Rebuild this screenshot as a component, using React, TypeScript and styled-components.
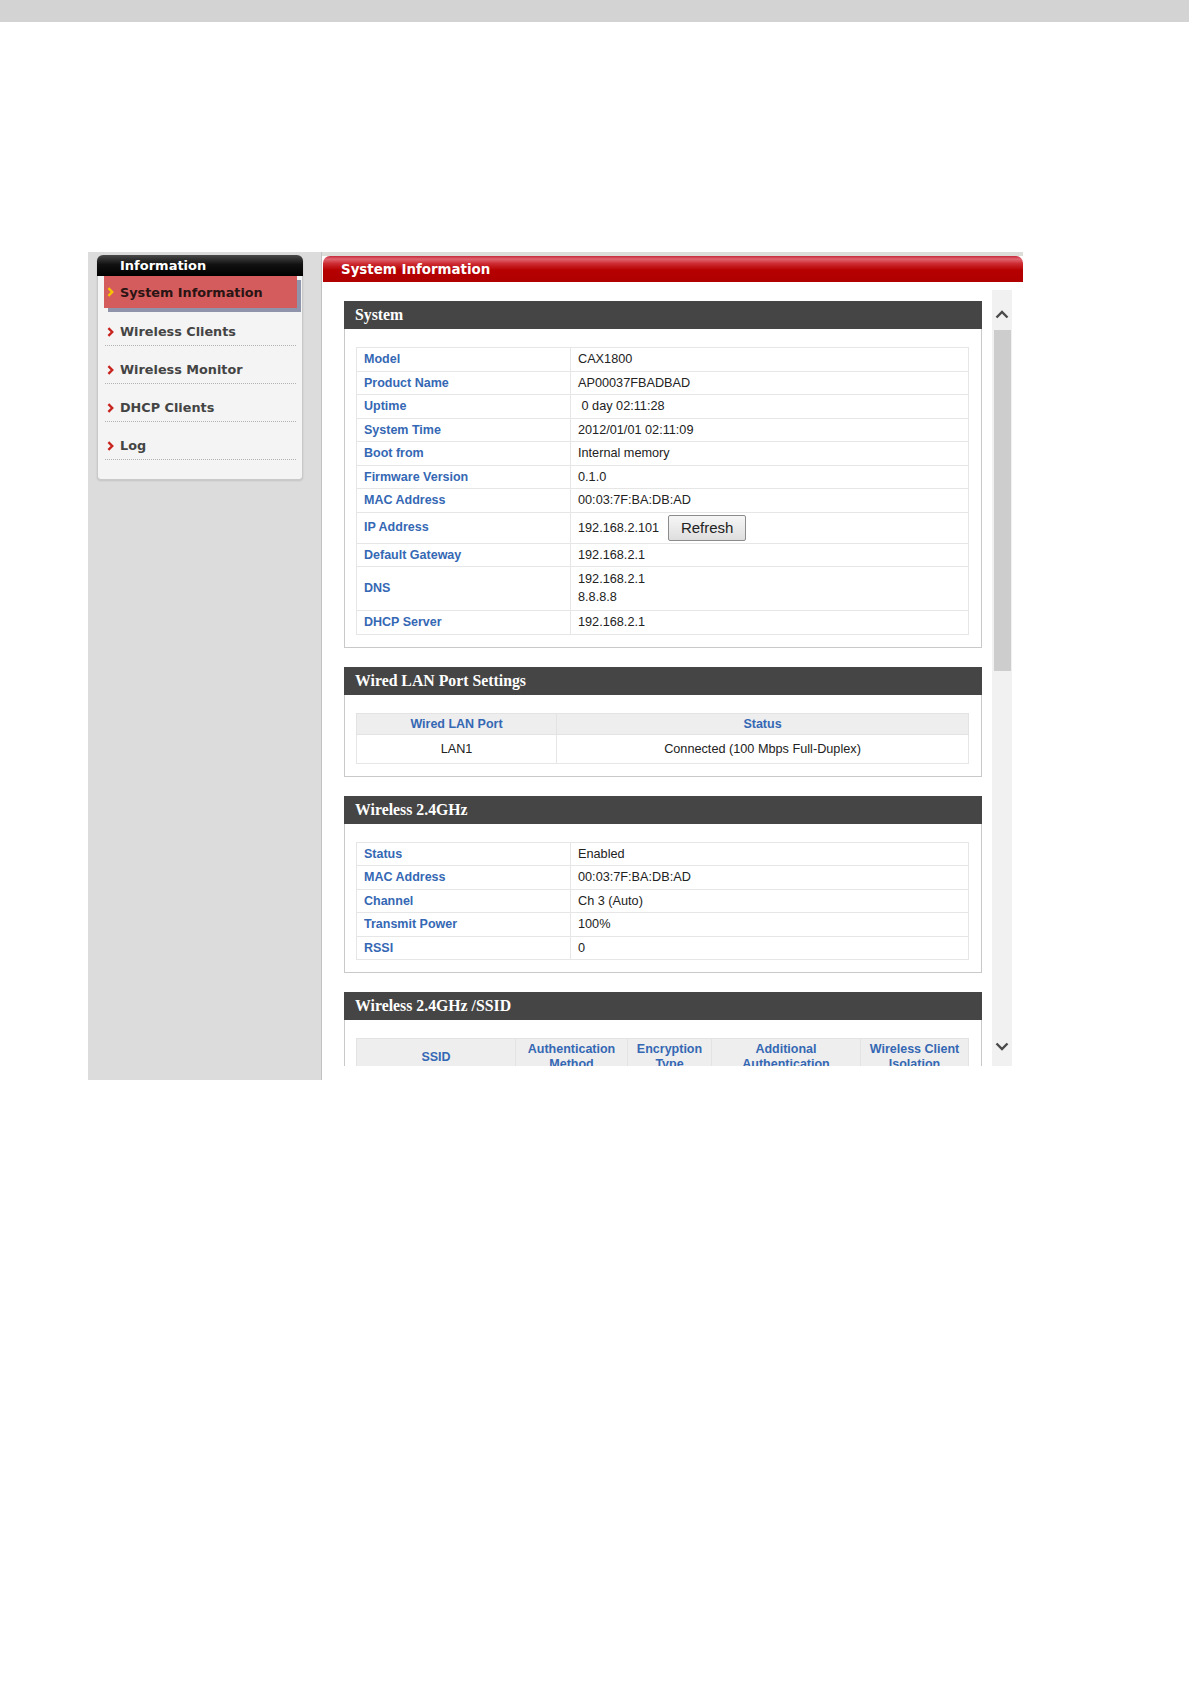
import styled, { createGlobalStyle } from 'styled-components';

const GlobalStyle = createGlobalStyle`
  html, body {
    margin: 0;
    padding: 0;
    background: #fff;
  }
  body {
    font-family: "Liberation Sans", Arial, sans-serif;
    color: #222;
  }
`;

// Page chrome
const TopBar = styled.div`
  width: 1189px;
  height: 22px;
  background: #d3d3d3;
`;

const Frame = styled.div`
  display: flex;
  align-items: flex-start;
  width: 935px;
  margin: 230px 0 0 88px;
`;

// Left menu
const SideColumn = styled.aside`
  box-sizing: border-box;
  width: 234px;
  height: 828px;
  padding: 3px 0 0 9px;
  background: #dcdcdc;
  border-right: 1px solid #c2c2c2;
`;

const Sidebar = styled.nav`
  box-sizing: border-box;
  width: 206px;
  padding-bottom: 19px;
  background: #f4f4f4;
  border: 1px solid #c9c9c9;
  border-top: none;
  border-radius: 6px 6px 4px 4px;
  box-shadow: 0 1px 2px rgba(0, 0, 0, 0.12);
  font-family: "DejaVu Sans", Verdana, sans-serif;
  font-weight: bold;
  font-size: 12.8px;
`;

const SideHead = styled.div`
  height: 21px;
  margin: 0 -1px;
  padding-left: 23px;
  line-height: 22px;
  color: #fff;
  font-size: 13px;
  background: linear-gradient(#4a4a4a 0%, #111 45%, #000 100%);
  border-radius: 6px 6px 0 0;
`;

const MenuItem = styled.div<{ $active?: boolean }>`
  box-sizing: border-box;
  display: flex;
  align-items: center;
  gap: 6px;
  ${p =>
    p.$active
      ? `
    height: 32px;
    margin: 0 5px 0 6px;
    padding-left: 3px;
    background: #d45c5c;
    color: #2a1414;
    box-shadow: 4px 4px 0 #9094aa;
    position: relative;
  `
      : `
    height: 38px;
    margin: 0 6px 0 7px;
    padding: 16px 0 0 2px;
    align-items: flex-start;
    line-height: 16px;
    color: #444;
    border-bottom: 1px dotted #b3b3b3;
  `}
`;

const Chevron = styled.svg`
  flex: none;
  width: 7px;
  height: 10px;
`;

// Main area
const Main = styled.section`
  width: 701px;
  border-top: 4px solid #dcdcd8;
  background: #fff;
`;

const RedBar = styled.div`
  height: 26px;
  margin-left: 1px;
  padding-left: 18px;
  line-height: 28px;
  border-radius: 7px 7px 0 0;
  background: linear-gradient(#c4283a 0%, #e0646e 12%, #cc2a30 30%, #b60000 55%, #b00000 100%);
  color: #fff;
  font-family: "DejaVu Sans", Verdana, sans-serif;
  font-weight: bold;
  font-size: 13.4px;
`;

const Scroller = styled.div`
  display: flex;
  height: 784px;
  overflow: hidden;
`;

const Content = styled.div`
  width: 638px;
  padding: 19px 0 0 22px;
`;

const ScrollTrack = styled.div`
  display: flex;
  flex-direction: column;
  align-items: center;
  width: 20px;
  height: 776px;
  margin: 8px 0 0 10px;
  background: #f1f1f1;
`;

const ArrowBox = styled.div<{ $down?: boolean }>`
  display: flex;
  justify-content: center;
  align-items: ${p => (p.$down ? 'center' : 'flex-end')};
  height: 40px;
  width: 100%;
  padding-bottom: ${p => (p.$down ? '0' : '11px')};
  box-sizing: border-box;
`;

const Thumb = styled.div`
  width: 17px;
  height: 341px;
  background: #cdcdcd;
`;

const TrackRest = styled.div`
  flex: 1;
`;

const Panel = styled.div`
  box-sizing: border-box;
  width: 638px;
  margin-bottom: 19px;
  border: 1px solid #c9c9c9;
  border-top: none;
`;

const PanelHead = styled.div`
  height: 28px;
  margin: 0 -1px;
  padding-left: 11px;
  line-height: 28px;
  background: #454545;
  color: #fff;
  font-family: "Liberation Serif", "Times New Roman", serif;
  font-weight: bold;
  font-size: 15.8px;
`;

const PanelBody = styled.div`
  padding: 18px 12px 12px 11px;
`;

const Table = styled.table`
  width: 100%;
  border-collapse: collapse;
  border: 1px solid #e0e0e0;
  font-size: 12.5px;
`;

const Label = styled.td`
  width: 199px;
  padding: 3px 7px;
  line-height: 16.5px;
  border: 1px solid #e6e6e6;
  color: #3568b4;
  font-weight: bold;
`;

const Value = styled.td<{ $tight?: boolean; $lines?: boolean }>`
  padding: ${p => (p.$tight ? '2px 7px' : p.$lines ? '4px 7px' : '3px 7px')};
  line-height: ${p => (p.$lines ? '17.5px' : '16.5px')};
  border: 1px solid #e6e6e6;
  color: #222;
  font-size: 12.7px;
`;

const HeadCell = styled.th<{ $w?: number }>`
  ${p => (p.$w ? `width: ${p.$w}px;` : '')}
  box-sizing: border-box;
  padding: 2px 4px;
  line-height: 16px;
  background: #eeeeee;
  border: 1px solid #e3e3e3;
  color: #3568b4;
  font-weight: bold;
  text-align: center;
  vertical-align: middle;
`;

const MultiHeadCell = styled(HeadCell)`
  padding: 3px 3px;
  line-height: 15px;
`;

const CenterCell = styled.td`
  padding: 6px 4px;
  line-height: 16px;
  border: 1px solid #e6e6e6;
  text-align: center;
  color: #222;
  font-size: 12.7px;
`;

const RefreshButton = styled.button`
  width: 78px;
  height: 26px;
  margin-left: 9px;
  padding: 0;
  vertical-align: middle;
  border: 1px solid #8c8c8c;
  border-radius: 2px;
  background: linear-gradient(#f6f6f6, #dedede);
  color: #222;
  font-family: "Liberation Sans", Arial, sans-serif;
  font-size: 15px;
`;

const IpText = styled.span`
  vertical-align: middle;
`;

const systemRows: [string, string][] = [
  ['Model', 'CAX1800'],
  ['Product Name', 'AP00037FBADBAD'],
  ['Uptime', '\u00a00 day 02:11:28'],
  ['System Time', '2012/01/01 02:11:09'],
  ['Boot from', 'Internal memory'],
  ['Firmware Version', '0.1.0'],
  ['MAC Address', '00:03:7F:BA:DB:AD'],
];

const wirelessRows: [string, string][] = [
  ['Status', 'Enabled'],
  ['MAC Address', '00:03:7F:BA:DB:AD'],
  ['Channel', 'Ch 3 (Auto)'],
  ['Transmit Power', '100%'],
  ['RSSI', '0'],
];

const menu = ['Wireless Clients', 'Wireless Monitor', 'DHCP Clients', 'Log'];

function MenuChevron({ color, top = 0 }: { color: string; top?: number }) {
  return (
    <Chevron viewBox="0 0 7 10" style={{ marginTop: top }}>
      <polyline points="1.4,1.2 5.2,5 1.4,8.8" fill="none" stroke={color} strokeWidth="2.4" />
    </Chevron>
  );
}

function ScrollArrow({ down }: { down?: boolean }) {
  return (
    <svg width="14" height="9" viewBox="0 0 14 9">
      <polyline
        points={down ? '1.5,1.5 7,7 12.5,1.5' : '1.5,7.5 7,2 12.5,7.5'}
        fill="none"
        stroke="#4a4a4a"
        strokeWidth="2.4"
      />
    </svg>
  );
}

export default function App() {
  return (
    <>
      <GlobalStyle />
      <TopBar />
      <Frame>
        <SideColumn>
          <Sidebar>
            <SideHead>Information</SideHead>
            <MenuItem $active>
              <MenuChevron color="#f7c600" />
              <span>System Information</span>
            </MenuItem>
            {menu.map(m => (
              <MenuItem key={m}>
                <MenuChevron color="#c8231d" top={3} />
                <span>{m}</span>
              </MenuItem>
            ))}
          </Sidebar>
        </SideColumn>

        <Main>
          <RedBar>System Information</RedBar>
          <Scroller>
            <Content>
              <Panel>
                <PanelHead>System</PanelHead>
                <PanelBody>
                  <Table>
                    <tbody>
                      {systemRows.map(([k, v]) => (
                        <tr key={k}>
                          <Label>{k}</Label>
                          <Value>{v}</Value>
                        </tr>
                      ))}
                      <tr>
                        <Label>IP Address</Label>
                        <Value $tight>
                          <IpText>192.168.2.101</IpText>
                          <RefreshButton type="button">Refresh</RefreshButton>
                        </Value>
                      </tr>
                      <tr>
                        <Label>Default Gateway</Label>
                        <Value>192.168.2.1</Value>
                      </tr>
                      <tr>
                        <Label>DNS</Label>
                        <Value $lines>
                          192.168.2.1
                          <br />
                          8.8.8.8
                        </Value>
                      </tr>
                      <tr>
                        <Label>DHCP Server</Label>
                        <Value>192.168.2.1</Value>
                      </tr>
                    </tbody>
                  </Table>
                </PanelBody>
              </Panel>

              <Panel>
                <PanelHead>Wired LAN Port Settings</PanelHead>
                <PanelBody>
                  <Table>
                    <thead>
                      <tr>
                        <HeadCell $w={200}>Wired LAN Port</HeadCell>
                        <HeadCell>Status</HeadCell>
                      </tr>
                    </thead>
                    <tbody>
                      <tr>
                        <CenterCell>LAN1</CenterCell>
                        <CenterCell>Connected (100 Mbps Full-Duplex)</CenterCell>
                      </tr>
                    </tbody>
                  </Table>
                </PanelBody>
              </Panel>

              <Panel>
                <PanelHead>Wireless 2.4GHz</PanelHead>
                <PanelBody>
                  <Table>
                    <tbody>
                      {wirelessRows.map(([k, v]) => (
                        <tr key={k}>
                          <Label>{k}</Label>
                          <Value>{v}</Value>
                        </tr>
                      ))}
                    </tbody>
                  </Table>
                </PanelBody>
              </Panel>

              <Panel>
                <PanelHead>Wireless 2.4GHz /SSID</PanelHead>
                <PanelBody>
                  <Table>
                    <thead>
                      <tr>
                        <MultiHeadCell $w={159}>SSID</MultiHeadCell>
                        <MultiHeadCell $w={112}>Authentication Method</MultiHeadCell>
                        <MultiHeadCell $w={84}>Encryption Type</MultiHeadCell>
                        <MultiHeadCell $w={149}>Additional Authentication</MultiHeadCell>
                        <MultiHeadCell>Wireless Client Isolation</MultiHeadCell>
                      </tr>
                    </thead>
                    <tbody>
                      <tr>
                        <CenterCell>AP00037FBADBAD</CenterCell>
                        <CenterCell>No Security</CenterCell>
                        <CenterCell>None</CenterCell>
                        <CenterCell>No additional authentication</CenterCell>
                        <CenterCell>Disabled</CenterCell>
                      </tr>
                    </tbody>
                  </Table>
                </PanelBody>
              </Panel>
            </Content>

            <ScrollTrack>
              <ArrowBox>
                <ScrollArrow />
              </ArrowBox>
              <Thumb />
              <TrackRest />
              <ArrowBox $down>
                <ScrollArrow down />
              </ArrowBox>
            </ScrollTrack>
          </Scroller>
        </Main>
      </Frame>
    </>
  );
}
